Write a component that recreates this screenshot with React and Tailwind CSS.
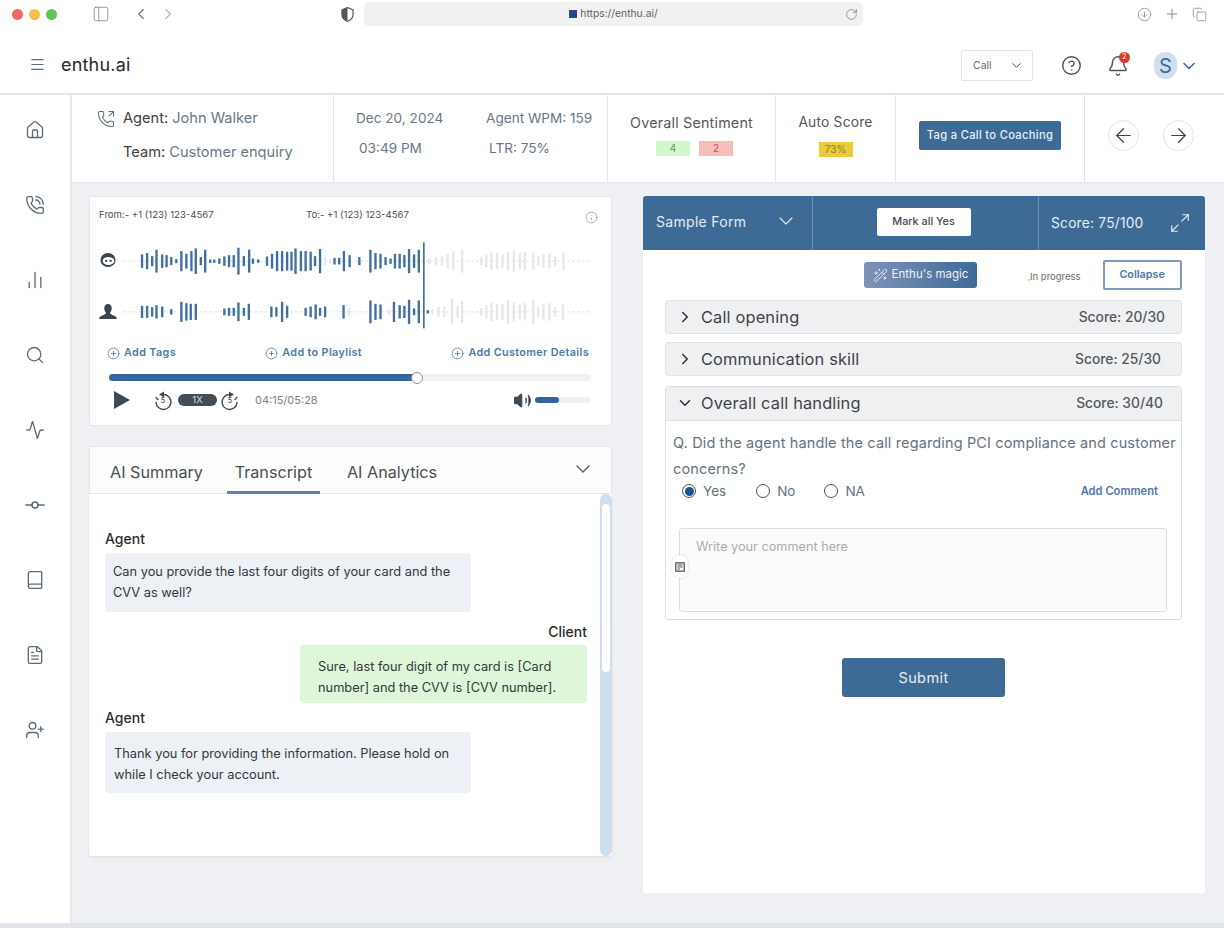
import React from "react";
import {
  Activity, ArrowDownCircle, ArrowLeft, ArrowRight, Bell, Book, ChartNoAxesColumn, ChevronDown,
  ChevronLeft, ChevronRight, CircleHelp, CirclePlus, Copy, FileText, GitCommitHorizontal, House,
  Info, Maximize2, Menu, PanelLeft, PhoneCall, PhoneOutgoing, Plus, RotateCw,
  Search, UserPlus, Volume2, WandSparkles,
} from "lucide-react";

const sideIcons = [House, PhoneCall, ChartNoAxesColumn, Search, Activity, GitCommitHorizontal, Book, FileText, UserPlus];

const topBars = [[165,20],[180,24],[195,15],[208,34],[225,20],[238,18],[252,12],[267,6],[282,30],[297,22],[312,30],[325,38],[340,12],[353,34],[368,5],[380,5],[395,8],[410,14],[424,18],[438,18],[452,40],[468,15],[484,34],[495,8],[511,5],[537,14],[552,22],[567,30],[582,30],[597,28],[610,28],[622,38],[638,30],[652,30],[667,28],[680,15],[695,36],[738,10],[752,10],[766,30],[783,18],[812,12],[845,34],[860,24],[875,22],[890,12],[905,8],[918,22],[932,22],[946,18],[960,36],[975,20],[989,34]];
const bottomBars = [[165,18],[180,18],[195,14],[208,20],[225,16],[252,8],[282,30],[297,26],[310,24],[325,24],[410,10],[424,12],[438,12],[452,28],[468,12],[483,24],[550,16],[565,14],[582,30],[597,18],[652,12],[667,16],[682,22],[695,12],[710,16],[765,20],[845,34],[860,24],[875,22],[915,30],[932,20],[946,18],[960,36],[975,10],[989,34],[1016,5]];
const fadedTop = [[710,12],[725,8],[1020,8],[1040,12],[1058,14],[1075,22],[1092,28],[1118,34],[1175,12],[1190,18],[1205,26],[1222,24],[1238,20],[1255,28],[1272,32],[1290,24],[1305,28],[1330,26],[1345,14],[1360,20],[1378,22],[1395,14],[1420,26]];
const fadedBottom = [[782,10],[900,8],[1030,8],[1048,14],[1065,16],[1088,38],[1105,18],[1118,32],[1175,12],[1190,20],[1205,28],[1222,24],[1238,24],[1255,36],[1272,30],[1290,22],[1305,26],[1330,36],[1345,16],[1360,24],[1378,26],[1395,14],[1418,24]];

function Bars({ items, cy, color }) {
  return items.map(([x, h]) => (
    <line key={x} x1={x} x2={x} y1={cy - h} y2={cy + h} stroke={color} strokeWidth="7" />
  ));
}

function Waveform() {
  return (
    <svg viewBox="110 140 1390 265" className="block h-[89px] w-[470px] shrink-0">
      <line x1="110" x2="1500" y1="200" y2="200" stroke="#d6d9dd" strokeWidth="2.5" strokeDasharray="8 7" />
      <line x1="110" x2="1500" y1="351" y2="351" stroke="#d6d9dd" strokeWidth="2.5" strokeDasharray="8 7" />
      <Bars items={fadedTop} cy={200} color="#e6e7ea" />
      <Bars items={fadedBottom} cy={351} color="#e6e7ea" />
      <Bars items={topBars} cy={200} color="#41709f" />
      <Bars items={bottomBars} cy={351} color="#41709f" />
      <line x1="1004" x2="1004" y1="144" y2="400" stroke="#41709f" strokeWidth="5" />
    </svg>
  );
}

function AgentGlyph() {
  return (
    <svg viewBox="0 0 20 18" className="h-[16px] w-[18px]">
      <ellipse cx="10" cy="9" rx="8.5" ry="8" fill="#3b4650" />
      <ellipse cx="10.5" cy="10" rx="6.5" ry="4.5" fill="#fff" />
      <circle cx="8" cy="10" r="1.3" fill="#3b4650" />
      <circle cx="13" cy="10" r="1.3" fill="#3b4650" />
    </svg>
  );
}

function ClientGlyph() {
  return (
    <svg viewBox="0 0 20 18" className="h-[16px] w-[18px]">
      <path d="M10 0c2.8 0 4.2 2.2 4.2 4.8 0 2.3-1 4-2 5 .5 1.5 2.5 2.6 5 3.3 1.400.5 2.300 1.500 2.600 3.100v.8H.2v-.8c.3-1.600 1.200-2.600 2.600-3.100 2.500-.7 4.500-1.800 5-3.300-1-1-2-2.700-2-5C5.800 2.200 7.200 0 10 0z" fill="#3b4650" />
    </svg>
  );
}

// open ring with an arrow head on top, mirrored for the forward button
function SkipIcon({ forward }) {
  return (
    <span className="relative flex h-[21px] w-[20px] items-center justify-center text-[#3f4a54]">
      <svg viewBox="0 0 20 21" className={`h-[21px] w-[20px] ${forward ? "-scale-x-100" : ""}`}>
        <path d="M10.500 4.500a7.500 7.500 0 1 1-7.500 8 M3 7.500l2 2" fill="none" stroke="currentColor" strokeWidth="1.400" strokeLinecap="round" />
        <path d="M6 4.500l5-3v6z" fill="currentColor" />
      </svg>
      <span className="absolute inset-x-0 top-[6px] text-center text-[7px] leading-[10px] font-medium">5</span>
    </span>
  );
}

function AddLink({ label }) {
  return (
    <span className="flex items-center gap-[4px] text-[10.8px] font-semibold tracking-[0.35px] text-[#4f78a6]">
      <CirclePlus size={13} strokeWidth={1.500} />
      {label}
    </span>
  );
}

function Section({ open, title, score, className }) {
  const Icon = open ? ChevronDown : ChevronRight;
  return (
    <div className={`flex h-[34px] items-center justify-between bg-[#eff0f2] pl-[10px] ${className}`}>
      <span className="flex items-center gap-[7px] text-[16.4px] tracking-[0.15px] text-[#3f4347]">
        <Icon size={18} strokeWidth={2} className="text-[#2c3034]" />
        {title}
      </span>
      <span className="text-[13.8px] font-medium text-[#55595d]">{score}</span>
    </div>
  );
}

function Radio({ label, checked }) {
  return (
    <span className="flex items-center gap-[7px] text-[13.5px] text-[#66727e]">
      <span className="flex h-[14px] w-[14px] items-center justify-center rounded-full border border-[#4a4f55]">
        {checked && <span className="h-[9px] w-[9px] rounded-full bg-[#1f5190]" />}
      </span>
      {label}
    </span>
  );
}

function Bubble({ className, children }) {
  return <div className={`rounded-[4px] text-[12.8px] leading-[21px] text-[#33383d] ${className}`}>{children}</div>;
}

export default function App() {
  return (
    <div className="flex h-[928px] flex-col overflow-hidden bg-[#eff0f3] font-['Inter',sans-serif]">
      {/* browser chrome */}
      <div className="flex h-[38px] shrink-0 items-center bg-white pb-[10px] text-[#8a8d90]">
        <div className="flex gap-[6px] pl-[12px]">
          <span className="h-[11px] w-[11px] rounded-full bg-[#ee6a5f]" />
          <span className="h-[11px] w-[11px] rounded-full bg-[#f6bd50]" />
          <span className="h-[11px] w-[11px] rounded-full bg-[#61c454]" />
        </div>
        <PanelLeft size={18} strokeWidth={1.2} className="ml-[35px]" />
        <ChevronLeft size={18} strokeWidth={1.5} className="ml-[22px] text-[#6c6f72]" />
        <ChevronRight size={18} strokeWidth={1.5} className="ml-[9px] text-[#b0b2b4]" />
        <svg viewBox="0 0 14 16" className="ml-[164px] h-[15px] w-[13px]">
          <path d="M7 .5 13 3v5c0 3.600-2.600 6-6 7.500C3.600 14 1 11.600 1 8V3z" fill="#fff" stroke="#55585b" strokeWidth="1.300" />
          <path d="M7 .5V15.500C3.600 14 1 11.600 1 8V3z" fill="#55585b" />
        </svg>
        <div className="relative ml-[10px] flex h-[24px] w-[499px] items-center justify-center rounded-[5px] bg-[#f1f1f2] text-[10.3px] text-[#5f6265]">
          <span className="mr-[3px] h-[8px] w-[8px] bg-[#28478f]" />
          https://enthu.ai/
          <RotateCw size={13} strokeWidth={1.4} className="absolute right-[5px] text-[#77797c]" />
        </div>
        <div className="ml-auto flex items-center gap-[12px] pr-[17px]">
          <ArrowDownCircle size={15} strokeWidth={1.3} />
          <Plus size={16} strokeWidth={1.5} />
          <Copy size={15} strokeWidth={1.3} />
        </div>
      </div>

      {/* app header */}
      <div className="flex h-[57px] shrink-0 items-center border-b-2 border-[#e4e5e7] bg-white">
        <Menu size={17} strokeWidth={1.7} className="mb-[2px] ml-[29px] text-[#5d6b78]" />
        <span className="mb-[2px] ml-[15px] text-[18px] tracking-[0.2px] text-[#26292c]">enthu.ai</span>
        <div className="ml-auto flex h-[31px] w-[72px] items-center justify-between rounded-[2px] border border-[#e3e4e6] pl-[11px] pr-[8px] text-[10.5px] text-[#696d71]">
          Call
          <ChevronDown size={15} strokeWidth={1.6} className="text-[#4c5054]" />
        </div>
        <CircleHelp size={21} strokeWidth={1.6} className="ml-[28px] text-[#48545e]" />
        <span className="relative ml-[25px] flex">
          <Bell size={22} strokeWidth={1.6} className="text-[#48545e]" />
          <span className="absolute right-[-1px] top-[-3px] flex h-[11px] w-[11px] items-center justify-center rounded-full bg-[#e2392c] text-[7px] text-white">2</span>
        </span>
        <span className="ml-[25px] flex h-[27px] w-[23px] items-center justify-center rounded-full bg-[#cfdef0] text-[20px] text-[#3e6b96]">S</span>
        <ChevronDown size={20} strokeWidth={1.9} className="ml-[2px] mr-[25px] text-[#3e6b96]" />
      </div>

      <div className="flex min-h-0 flex-1">
        {/* sidebar */}
        <div className="flex w-[72px] shrink-0 flex-col items-center gap-[55px] border-r-2 border-[#e8e9eb] bg-white pt-[25px] text-[#5d6b78]">
          {sideIcons.map((Icon, i) => (
            <span key={i} className="flex h-[20px] w-[20px] items-center justify-center">
              <Icon size={i === 5 ? 24 : 20} strokeWidth={1.6} className="shrink-0" />
            </span>
          ))}
        </div>

        <div className="flex min-w-0 flex-1 flex-col">
          {/* call summary */}
          <div className="flex h-[88px] shrink-0 border-b border-[#e6e7e9] bg-white text-[#697785]">
            <div className="flex w-[262px] shrink-0 flex-col border-r border-[#e4e5e7] pl-[25px] pt-[14px] text-[14.6px]">
              <div className="flex h-[20px] items-center gap-[8px]">
                <PhoneOutgoing size={18} strokeWidth={1.4} className="text-[#5d6b78]" />
                <span><span className="text-[#3d4145]">Agent: </span>John Walker</span>
              </div>
              <div className="ml-[26px] mt-[14px] flex h-[20px] items-center">
                <span><span className="text-[#3d4145]">Team: </span>Customer enquiry</span>
              </div>
            </div>
            <div className="grid w-[274px] shrink-0 grid-cols-[130px_1fr] grid-rows-[20px_20px] gap-y-[10px] border-r border-[#e4e5e7] pl-[22px] pt-[13px] text-[13.6px]">
              <span>Dec 20, 2024</span>
              <span>Agent WPM: 159</span>
              <span className="pl-[3px]">03:49 PM</span>
              <span className="pl-[3px]">LTR: 75%</span>
            </div>
            <div className="flex w-[168px] shrink-0 flex-col items-center border-r border-[#e4e5e7] pt-[17px]">
              <span className="text-[14.3px] tracking-[0.2px] text-[#55595d]">Overall Sentiment</span>
              <div className="ml-[6px] mt-[8px] flex gap-[9px] text-[10px]">
                <span className="flex h-[15px] w-[34px] items-center justify-center bg-[#d3f5cf] text-[#5aa052]">4</span>
                <span className="flex h-[15px] w-[34px] items-center justify-center bg-[#f6bdbb] text-[#d4514a]">2</span>
              </div>
            </div>
            <div className="flex w-[120px] shrink-0 flex-col items-center border-r border-[#e4e5e7] pt-[17px]">
              <span className="text-[13.8px] tracking-[0.2px] text-[#55595d]">Auto Score</span>
              <span className="mt-[9px] flex h-[15px] w-[34px] items-center justify-center bg-[#eacb3c] text-[10px] text-[#8f7f2a]">73%</span>
            </div>
            <div className="flex w-[189px] shrink-0 items-center justify-center border-r border-[#e4e5e7] pb-[7px]">
              <span className="flex h-[29px] w-[142px] items-center justify-center rounded-[2px] bg-[#3e6b96] text-[11.2px] font-medium tracking-[0.3px] text-[#e8eef4]">Tag a Call to Coaching</span>
            </div>
            <div className="flex flex-1 items-center gap-[24px] pb-[6px] pl-[23px]">
              <span className="flex h-[31px] w-[31px] items-center justify-center rounded-full border border-[#e2e3e5] text-[#3f4347]"><ArrowLeft size={23} strokeWidth={1.3} /></span>
              <span className="flex h-[31px] w-[31px] items-center justify-center rounded-full border border-[#e2e3e5] text-[#3f4347]"><ArrowRight size={23} strokeWidth={1.3} /></span>
            </div>
          </div>

          <div className="flex min-h-0 flex-1 gap-[31px] pl-[17px] pt-[13px]">
            <div className="flex w-[523px] shrink-0 flex-col">
              {/* audio player */}
              <div className="h-[230px] shrink-0 rounded-[3px] border border-[#e4e5e7] bg-white pl-[9px] pr-[13px] pt-[12px]">
                <div className="flex h-[13px] items-center text-[9.6px] text-[#4a4e52]">
                  <span className="w-[207px]">From:- +1 (123) 123-4567</span>
                  <span>To:- +1 (123) 123-4567</span>
                  <Info size={13} strokeWidth={1.1} className="ml-auto mt-[3px] text-[#7e8184]" />
                </div>
                <div className="mt-[19px] flex items-start">
                  <div className="flex w-[23px] shrink-0 flex-col items-start gap-[36px] pt-[11px]">
                    <AgentGlyph />
                    <ClientGlyph />
                  </div>
                  <Waveform />
                </div>
                <div className="mt-[15px] flex justify-between pl-[8px] pr-[9px]">
                  <AddLink label="Add Tags" />
                  <AddLink label="Add to Playlist" />
                  <AddLink label="Add Customer Details" />
                </div>
                <div className="relative ml-[10px] mr-[7px] mt-[13px] h-[7px] rounded-full bg-[#f0f1f3]">
                  <div className="h-full w-[308px] rounded-full bg-[#36659e]" />
                  <span className="absolute left-[302px] top-[-2.500px] h-[12px] w-[12px] rounded-full border border-[#8d9094] bg-white" />
                </div>
                <div className="mt-[8px] flex h-[22px] items-center text-[#3f4a54]">
                  <svg viewBox="0 0 16 18" className="ml-[15px] h-[18px] w-[16px]"><path d="M0 0l16 9-16 9z" fill="#3f4a54" /></svg>
                  <span className="ml-[23px]"><SkipIcon /></span>
                  <span className="ml-[5px] flex h-[12px] w-[39px] items-center justify-center rounded-full bg-[#444d54] text-[9.5px] text-[#d9dcde]">1X</span>
                  <span className="ml-[3px]"><SkipIcon forward /></span>
                  <span className="ml-[15px] text-[11px] text-[#7d8186]">04:15/05:28</span>
                  <Volume2 size={19} strokeWidth={1.5} fill="#3f4a54" className="ml-auto" />
                  <span className="ml-[3px] mr-[7px] h-[6px] w-[56px] rounded-full bg-[#f0f1f3]">
                    <span className="block h-full w-[24px] rounded-full bg-[#36659e]" />
                  </span>
                </div>
              </div>

              {/* transcript */}
              <div className="mt-[20px] flex h-[48px] shrink-0 items-center rounded-t-[3px] border border-[#e4e5e7] bg-[#fdfdfd] pt-[4px] text-[16.2px] text-[#4a4e52]">
                <span className="ml-[20px]">AI Summary</span>
                <div className="relative ml-[24px] flex h-[44px] w-[93px] items-center justify-center border-b-[3px] border-[#5e7fb1] pt-[3px] text-[#4a4e52]">Transcript</div>
                <span className="ml-[27px]">AI Analytics</span>
                <ChevronDown size={24} strokeWidth={1.4} className="mb-[6px] ml-auto mr-[16px] text-[#55595d]" />
              </div>
              <div className="flex h-[362px] shrink-0 rounded-b-[3px] bg-white shadow-[0_1px_3px_rgba(0,0,0,0.08)]">
                <div className="flex min-w-0 flex-1 flex-col pl-[16px] pr-[13px] pt-[36px]">
                  <span className="text-[14px] leading-[18px] font-medium text-[#2a2d30]">Agent</span>
                  <Bubble className="mt-[5px] h-[59px] w-[366px] bg-[#edf0f4] pl-[8px] pt-[8px]">
                    Can you provide the last four digits of your card and the CVV as well?
                  </Bubble>
                  <span className="mt-[11px] self-end text-[14px] leading-[18px] font-medium text-[#2a2d30]">Client</span>
                  <Bubble className="mt-[4px] h-[58px] w-[287px] self-end bg-[#dff7d8] pl-[18px] pr-[8px] pt-[11px]">
                    Sure, last four digit of my card is [Card number] and the CVV is [CVV number].
                  </Bubble>
                  <span className="mt-[6px] text-[14px] leading-[18px] font-medium text-[#2a2d30]">Agent</span>
                  <Bubble className="mt-[5px] h-[61px] w-[366px] bg-[#edf0f4] pl-[9px] pt-[11px]">
                    Thank you for providing the information. Please hold on while I check your account.
                  </Bubble>
                </div>
                <div className="w-[12px] shrink-0 rounded-full bg-[#cfdeef] px-[2px] pt-[10px]">
                  <div className="h-[168px] rounded-full bg-white" />
                </div>
              </div>
            </div>

            {/* scoring form */}
            <div className="mb-[30px] w-[562px] shrink-0 rounded-[3px] bg-white">
              <div className="flex h-[54px] items-stretch rounded-t-[3px] bg-[#3e6b96] text-[#e4ebf2]">
                <div className="flex w-[170px] items-center justify-between border-r border-[#6e8eae] pb-[4px] pl-[13px] pr-[14px] text-[14px] tracking-[0.3px]">
                  Sample Form
                  <ChevronDown size={24} strokeWidth={1.1} />
                </div>
                <div className="flex w-[226px] items-center justify-center border-r border-[#6e8eae] pb-[2px] pr-[4px]">
                  <span className="flex h-[28px] w-[94px] items-center justify-center rounded-[2px] bg-white text-[10.8px] font-medium text-[#45494d]">Mark all Yes</span>
                </div>
                <div className="flex flex-1 items-center justify-between pl-[12px] pr-[14px] text-[13.8px] tracking-[0.2px]">
                  Score: 75/100
                  <Maximize2 size={22} strokeWidth={1.3} />
                </div>
              </div>
              <div className="mt-[10px] flex items-center pl-[221px]">
                <span className="flex h-[26px] w-[113px] items-center justify-center gap-[4px] rounded-[3px] bg-gradient-to-r from-[#7e93b8] to-[#3e6b96] text-[11.5px] text-[#eef2f7]">
                  <WandSparkles size={15} strokeWidth={1.5} />
                  Enthu's magic
                </span>
                <span className="ml-[51px] mt-[4px] flex items-center text-[9.5px] text-[#686c70]">
                  <span className="mt-[5px] h-[2px] w-[2px] rounded-full bg-[#eacb3c]" />
                  In progress
                </span>
                <span className="ml-[22px] flex h-[30px] w-[79px] items-center justify-center rounded-[2px] border-2 border-[#7b9bc0] text-[10.8px] font-semibold text-[#4f78a6]">Collapse</span>
              </div>
              <div className="ml-[22px] mr-[23px] mt-[10px]">
                <Section title="Call opening" score="Score: 20/30" className="rounded-[3px] border border-[#e2e3e5] pr-[16px]" />
                <Section title="Communication skill" score="Score: 25/30" className="mt-[8px] rounded-[3px] border border-[#e2e3e5] pr-[20px]" />
                <div className="relative mt-[10px] h-[234px] rounded-[3px] border border-[#dcdde0]">
                  <Section open title="Overall call handling" score="Score: 30/40" className="border-b border-[#dfe0e2] pr-[18px]" />
                  <p className="pl-[7px] pr-[2px] pt-[9px] text-[14.5px] leading-[26px] tracking-[0.14px] text-[#66727e]">
                    Q. Did the agent handle the call regarding PCI compliance and customer concerns?
                  </p>
                  <div className="mt-[-1px] flex items-center pl-[16px]">
                    <Radio checked label="Yes" />
                    <span className="ml-[30px]"><Radio label="No" /></span>
                    <span className="ml-[29px]"><Radio label="NA" /></span>
                    <span className="ml-auto mr-[23px] text-[11.2px] font-semibold text-[#4f78a6]">Add Comment</span>
                  </div>
                  <div className="ml-[13px] mr-[14px] mt-[27px] h-[84px] rounded-[3px] border border-[#dcdde0] bg-[#fbfbfb] pl-[16px] pt-[8px] text-[12.7px] text-[#a9acaf]">
                    Write your comment here
                  </div>
                  <span className="absolute left-[6px] top-[168px] flex h-[23px] w-[16px] items-center justify-center rounded-full bg-white shadow-[0_0_3px_rgba(0,0,0,0.15)]">
                    <svg viewBox="0 0 10 10" className="h-[10px] w-[10px]">
                      <path d="M.8.8h8.400v8.400H.8z M2.500 3h5 M2.500 5h5 M2.500 7h2.500" fill="none" stroke="#4a4e52" strokeWidth="1.200" />
                    </svg>
                  </span>
                </div>
              </div>
              <div className="ml-[199px] mt-[38px] flex h-[39px] w-[163px] items-center justify-center rounded-[3px] bg-[#3e6b96] text-[14.5px] tracking-[0.4px] text-[#e8eef4]">Submit</div>
            </div>
          </div>
        </div>
      </div>
      <div className="h-[5px] shrink-0 bg-[#e3e5ec]" />
    </div>
  );
}
